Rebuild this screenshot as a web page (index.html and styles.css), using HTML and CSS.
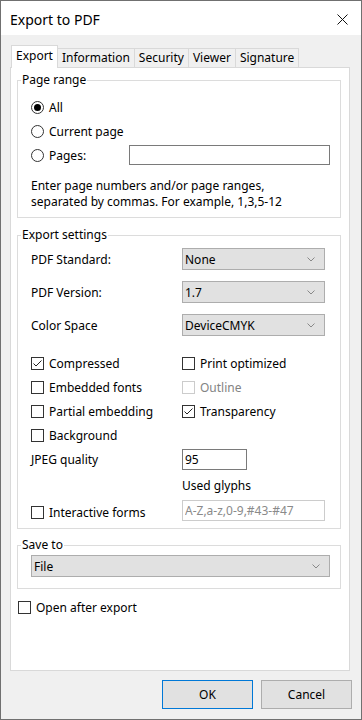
FILE: index.html
```html
<!DOCTYPE html>
<html lang="en">
<head>
    <meta charset="UTF-8">
    <title>Export to PDF</title>
    <link rel="stylesheet" href="styles.css">
</head>
<body>
    <div class="window">
        <div class="titlebar">
            <span class="title">Export to PDF</span>
            <svg class="close" width="11" height="11" viewBox="0 0 11 11">
                <path d="M0.5 0.5 L10.5 10.5 M10.5 0.5 L0.5 10.5" stroke="#111" stroke-width="1" fill="none"/>
            </svg>
        </div>
        <div class="client">
            <div class="tabs">
                <div class="tab active">Export</div>
                <div class="tab">Information</div>
                <div class="tab">Security</div>
                <div class="tab">Viewer</div>
                <div class="tab">Signature</div>
            </div>
            <div class="panel">
                <fieldset class="group range">
                    <legend>Page range</legend>
                    <div class="group-body">
                        <div class="option"><span class="radio checked"></span>All</div>
                        <div class="option"><span class="radio"></span>Current page</div>
                        <div class="option"><span class="radio"></span>Pages:<input class="text pages" type="text"></div>
                        <p class="help">Enter page numbers and/or page ranges,<br>separated by commas. For example, 1,3,5-12</p>
                    </div>
                </fieldset>

                <fieldset class="group settings">
                    <legend>Export settings</legend>
                    <div class="group-body">
                        <div class="field-row">
                            <span class="field-label">PDF Standard:</span>
                            <div class="select short"><span>None</span><svg class="chevron" width="8" height="5" viewBox="0 0 8 5"><path d="M0.5 0.5 L4 4 L7.5 0.5" stroke="#888" fill="none"/></svg></div>
                        </div>
                        <div class="field-row">
                            <span class="field-label">PDF Version:</span>
                            <div class="select short"><span>1.7</span><svg class="chevron" width="8" height="5" viewBox="0 0 8 5"><path d="M0.5 0.5 L4 4 L7.5 0.5" stroke="#888" fill="none"/></svg></div>
                        </div>
                        <div class="field-row">
                            <span class="field-label">Color Space</span>
                            <div class="select short"><span>DeviceCMYK</span><svg class="chevron" width="8" height="5" viewBox="0 0 8 5"><path d="M0.5 0.5 L4 4 L7.5 0.5" stroke="#888" fill="none"/></svg></div>
                        </div>

                        <div class="checks">
                            <div class="option"><span class="check"><svg width="11" height="11" viewBox="0 0 11 11"><path d="M1.5 5.5 L4 8 L9.5 2.5" stroke="#222" fill="none"/></svg></span>Compressed</div>
                            <div class="option"><span class="check"></span>Print optimized</div>
                            <div class="option"><span class="check"></span>Embedded fonts</div>
                            <div class="option disabled"><span class="check"></span>Outline</div>
                            <div class="option"><span class="check"></span>Partial embedding</div>
                            <div class="option"><span class="check"><svg width="11" height="11" viewBox="0 0 11 11"><path d="M1.5 5.5 L4 8 L9.5 2.5" stroke="#222" fill="none"/></svg></span>Transparency</div>
                            <div class="option"><span class="check"></span>Background</div>
                        </div>

                        <div class="jpeg-row">
                            <span class="field-label">JPEG quality</span>
                            <input class="text jpeg" type="text" value="95">
                        </div>
                        <div class="glyphs-label">Used glyphs</div>
                        <div class="forms-row">
                            <div class="option field-label"><span class="check"></span>Interactive forms</div>
                            <input class="text glyphs" type="text" value="A-Z,a-z,0-9,#43-#47" disabled>
                        </div>
                    </div>
                </fieldset>

                <fieldset class="group save">
                    <legend>Save to</legend>
                    <div class="group-body">
                        <div class="select"><span>File</span><svg class="chevron" width="8" height="5" viewBox="0 0 8 5"><path d="M0.5 0.5 L4 4 L7.5 0.5" stroke="#888" fill="none"/></svg></div>
                    </div>
                </fieldset>

                <div class="option open-after"><span class="check"></span>Open after export</div>
            </div>
            <div class="buttons">
                <button class="btn default">OK</button>
                <button class="btn">Cancel</button>
            </div>
        </div>
    </div>
</body>
</html>
```

FILE: styles.css
```css
* {
    box-sizing: border-box;
}

html, body {
    margin: 0;
    padding: 0;
}

body {
    font-family: "Segoe UI", "Noto Sans", sans-serif;
    font-size: 12px;
    color: #000;
    background: #fff;
}

.window {
    width: 362px;
    height: 720px;
    border: 1px solid #707070;
    display: flex;
    flex-direction: column;
    background: #f0f0f0;
}

.titlebar {
    height: 34px;
    flex: none;
    background: #fff;
    display: flex;
    align-items: center;
    justify-content: space-between;
    padding: 2px 13px 0 9px;
}

.title {
    font-size: 14px;
}

.client {
    flex: 1;
    display: flex;
    flex-direction: column;
    padding: 10px 11px 10px 9px;
}

.tabs {
    display: flex;
    align-items: flex-end;
    height: 22px;
    padding-left: 2px;
}

.tab {
    height: 19px;
    line-height: 17px;
    padding: 0 4px;
    margin-left: -1px;
    border: 1px solid #d9d9d9;
    border-bottom: none;
    background: #f0f0f0;
}

.tab.active {
    height: 23px;
    line-height: 20px;
    margin-bottom: -1px;
    background: #fff;
    position: relative;
    z-index: 1;
}

.panel {
    flex: 1;
    display: flex;
    flex-direction: column;
    background: #fff;
    border: 1px solid #d9d9d9;
    padding: 0 8px 0 6px;
}

.group {
    border: 1px solid #dcdcdc;
    margin: 0;
    padding: 0;
    min-width: 0;
}

.group legend {
    margin-left: 3px;
    padding: 0 1px;
    line-height: 16px;
}

.range {
    margin-top: 4px;
}

.range .group-body {
    padding: 7px 10px 7px 13px;
}

.settings {
    margin-top: 9px;
}

.settings .group-body {
    padding: 5px 15px 7px 13px;
}

.save {
    margin-top: 8px;
}

.save .group-body {
    padding: 2px 10px 11px 13px;
}

.option {
    display: flex;
    align-items: center;
    height: 24px;
}

.option.disabled {
    color: #838383;
}

.radio {
    width: 13px;
    height: 13px;
    border: 1px solid #333;
    border-radius: 50%;
    margin-right: 5px;
    display: flex;
    align-items: center;
    justify-content: center;
}

.radio.checked::after {
    content: "";
    width: 7px;
    height: 7px;
    border-radius: 50%;
    background: #000;
}

.check {
    width: 13px;
    height: 13px;
    border: 1px solid #333;
    margin-right: 5px;
    flex: none;
}

.check svg {
    display: block;
}

.disabled .check {
    border-color: #ccc;
}

.help {
    margin: 11px 0 0;
    line-height: 16px;
}

.text {
    font: inherit;
    color: #000;
    background: #fff;
    border: 1px solid #7a7a7a;
    padding: 0 2px;
    height: 21px;
    outline: none;
}

.pages {
    margin-left: auto;
    width: 201px;
    height: 20px;
}

.field-row {
    display: flex;
    align-items: center;
    height: 22px;
}

.field-row + .field-row {
    margin-top: 11px;
}

.field-label {
    width: 151px;
    flex: none;
}

.select {
    display: flex;
    align-items: center;
    justify-content: space-between;
    height: 22px;
    border: 1px solid #adadad;
    background: #e1e1e1;
    padding: 0 9px 0 2px;
}

.select.short {
    width: 143px;
}

.chevron {
    display: block;
}

.checks {
    display: grid;
    grid-template-columns: 151px 1fr;
    grid-auto-rows: 24px;
    margin-top: 15px;
}

.jpeg-row {
    display: flex;
    align-items: center;
    height: 21px;
    margin-top: 2px;
}

.jpeg {
    width: 65px;
}

.glyphs-label {
    margin: 8px 0 0 151px;
    line-height: 16px;
}

.forms-row {
    display: flex;
    align-items: center;
    height: 21px;
    margin-top: 6px;
}

.forms-row .option {
    height: 21px;
    padding-top: 4px;
}

.glyphs {
    width: 143px;
    border-color: #ccc;
    color: #8a8a8a;
}

.open-after {
    margin: 6px 0 0 1px;
}

.buttons {
    display: flex;
    justify-content: flex-end;
    gap: 8px;
    margin: 9px -2px 0 0;
}

.btn {
    font: inherit;
    width: 91px;
    height: 29px;
    border: 1px solid #adadad;
    background: #e1e1e1;
    color: #000;
    padding: 0;
}

.btn.default {
    border-color: #0078d7;
}
```
